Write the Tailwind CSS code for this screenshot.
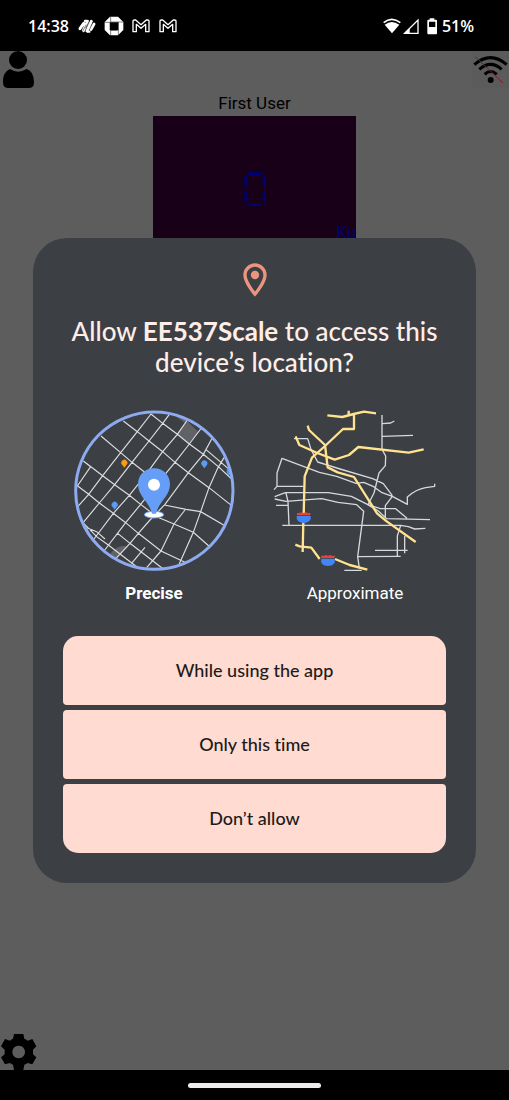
<!DOCTYPE html>
<html lang="en">
<head>
<meta charset="utf-8">
<meta name="viewport" content="width=device-width, initial-scale=1">
<title>Location permission</title>
<script src="https://cdn.jsdelivr.net/npm/@tailwindcss/browser@4"></script>
</head>
<body class="flex min-h-screen flex-col bg-black font-['Roboto',sans-serif]">

<header class="flex h-[51px] items-center justify-between pl-7 pr-[35px] text-white">
  <div class="flex items-center gap-2">
    <time class="font-['Open_Sans',sans-serif] text-[16px] font-semibold leading-6">14:38</time>
    <div class="flex items-center gap-[7px]">
      <svg class="size-5" viewBox="230 47 60 60" fill="none" stroke="#fff" stroke-width="9" stroke-linecap="round" aria-hidden="true">
        <path d="M239 85L250 69M249 91L262 63M260 92L273 63M272 87L281 71"/>
        <path d="M254 62h4M263 94h4" stroke-width="7"/>
        <path d="M246 95L257 74M256 83L267 62M267 88L278 66" stroke="#000" stroke-width="1.5"/>
      </svg>
      <svg class="size-5" viewBox="312 47 60 60" fill="#fff" aria-hidden="true">
        <path fill-rule="evenodd" d="M330 49h24l16 16v24l-16 16h-24l-16-16V65zM330 66v24h25V66z"/>
        <path d="M332 49v16h37M355 65v39M352 90h-20V106M330 90V66H314" fill="none" stroke="#000" stroke-width="1.5"/>
      </svg>
      <svg class="size-5" viewBox="394 47 60 60" fill="none" stroke="#fff" stroke-width="4" stroke-linejoin="round" aria-hidden="true">
        <path id="mail-mark" d="M400 94V62q0-3 4-3h4l16 14 16-14h4q4 0 4 3v32h-10V72l-14 12-14-12v22z"/>
      </svg>
      <svg class="size-5" viewBox="394 47 60 60" fill="none" stroke="#fff" stroke-width="4" stroke-linejoin="round" aria-hidden="true">
        <use href="#mail-mark"/>
      </svg>
    </div>
  </div>
  <div class="flex items-center">
    <svg class="h-[18px] w-[56px]" viewBox="84 50 168 54" fill="none" aria-hidden="true">
      <path d="M89 67Q113 47 139 67" stroke="#fff" stroke-width="5"/>
      <path d="M92 73Q113 57 136 73L114 99z" fill="#fff"/>
      <path d="M152 99L192 59v40z" stroke="#fff" stroke-width="4"/>
      <path d="M150 101L167 83v18z" fill="#fff"/>
      <path fill-rule="evenodd" fill="#fff" d="M227 54h14v4h5q3 0 3 3v38q0 3-3 3h-23q-3 0-3-3V61q0-3 3-3h4zM225 64v16h19V64z"/>
    </svg>
    <span class="ml-1 font-['Open_Sans',sans-serif] text-[16px] font-semibold leading-6">51%</span>
  </div>
</header>

<main class="relative flex grow flex-col bg-[#5d5d5d]">
  <div class="flex items-start justify-between">
    <button type="button" aria-label="User profile" class="h-10 w-[37px]">
      <svg class="h-10 w-[37px]" viewBox="0 153 111 120" aria-hidden="true"><circle cx="54" cy="180" r="27"/><path d="M9 247Q8 216 30 207Q54 223 80 207Q102 214 102 247Q102 264 88 264H23Q9 264 9 247z"/></svg>
    </button>
    <button type="button" aria-label="Connection status" class="h-10 w-[37px]">
      <svg class="h-10 w-[37px]" viewBox="351 153 111 120" fill="none" stroke="#000" stroke-width="9" aria-hidden="true">
        <path d="M351 153h111v110H351z" fill="#5b5b5b" stroke="none"/>
        <path d="M358 194Q407 152 455 194M373 208Q407 178 440 208M389 223Q407 206 425 223"/><circle cx="407" cy="240" r="9" fill="#000" stroke="none"/>
        <path d="M361 170L444 249" stroke="#7a2025" stroke-width="3"/>
      </svg>
    </button>
  </div>
  <h1 class="text-center text-[17px] leading-6 text-black">First User</h1>
  <section aria-label="Weight" class="relative mx-auto mt-px flex h-[146px] w-2/5 items-center justify-center bg-[#190019]">
    <svg role="img" aria-label="0" class="h-9 w-6" viewBox="308 243 72 108" fill="#00006c">
      <path d="M321 246h46l-4 9h-38zM321 348h46l-4-9h-38zM312 255l9 5v27l-9 6zM312 301l9 6v27l-9 6zM376 255l-9 5v27l9 6zM376 301l-9 6v27l9 6z"/>
    </svg>
    <span class="absolute right-0 bottom-[18px] text-[17px] leading-6 text-[#00006c]">Kg</span>
  </section>
  <div class="grow"></div>
  <button type="button" aria-label="Settings" class="h-9 w-[37px]">
    <svg class="h-9 w-[37px]" viewBox="0 42 111 108" aria-hidden="true"><path fill-rule="evenodd" d="M42 42h28l3 14q5 2 10 6l14-5 12 22-10 10v14l10 9-12 21-14-4q-5 3-10 5l-3 16H42l-3-16q-5-2-9-5l-15 4-12-21 11-9V89L3 79l12-22 15 5q4-4 9-6zM55.500 77a19 19 0 1 0 1 0z"/></svg>
  </button>

  <div class="absolute inset-0 flex items-center justify-center px-[33px]">
    <div role="dialog" aria-modal="true" aria-labelledby="dialog-title" class="flex w-full max-w-xl flex-col items-center rounded-[34px] bg-[#3c3f43] px-[30px] pt-[22px] pb-[30px] [font-variant-ligatures:none]">
      <svg class="size-10" viewBox="0 0 24 24" fill="#ec957e" aria-hidden="true"><path fill-rule="evenodd" d="M12 2C8.130 2 5 5.130 5 9c0 5.250 7 13 7 13s7-7.750 7-13c0-3.870-3.130-7-7-7zM7 9c0-2.760 2.240-5 5-5s5 2.240 5 5c0 2.880-2.880 7.190-5 9.880C9.920 16.210 7 11.850 7 9z"/><circle cx="12" cy="9" r="2.500"/></svg>
      <h2 id="dialog-title" class="mt-4 text-center font-['Lato',sans-serif] text-[26px] font-medium leading-[31px] text-[#ffede8]">Allow <b class="font-bold">EE537Scale</b> to access this<br>device’s location?</h2>

      <div role="radiogroup" aria-label="Location accuracy" class="mt-[27px] flex justify-center gap-[31px] text-[17px] leading-6 text-white">
        <label class="relative flex flex-col items-center gap-[6px] font-bold">
          <input type="radio" name="accuracy" value="precise" checked class="absolute inset-0 appearance-none">
          <svg class="size-[170px]" viewBox="-3 0 510 510" fill="none" aria-hidden="true">
            <clipPath id="disc"><circle cx="253" cy="257" r="237"/></clipPath>
            <g clip-path="url(#disc)">
              <path fill="#606265" d="M305 25L345 43L385 80L357 115L322 88L344 53zM120 448Q140 418 175 424L140 460z"/>
              <path stroke="#dcdee0" stroke-width="3.500" d="M160 48L202 80 237 108 278 140 315 172 355 203 417 248 485 302M243 27L278 55 322 88 358 117 400 148 445 185 485 222M93 93L152 143 186 172 250 222M40 168L98 212 134 239 178 271 212 298 260 335 312 357 370 382 420 426M20 241L56 268 88 294 130 325 167 353 205 385 273 438 345 472M36 350L80 395 115 420 150 447 200 485M50 368L80 380 105 402M143 385L180 415 213 440 245 465 280 492M62 185L22 243M40 168L62 185M243 27L202 80 152 143 98 212 56 268 24 304M298 28L278 55 237 108 186 172 134 239 88 294 40 352M352 45L322 88 278 140 228 208 178 271 130 325 72 402M392 72L358 117 315 172 250 250 212 298 167 353 102 438M425 102L400 148 355 203 285 298 240 345 205 385 180 415 138 460M225 427L184 476M273 438L230 488M283 300L348 313 392 320 462 361M345 315L312 357 273 438M462 158L443 190 417 248 392 320 370 382 322 490M400 148L408 134 460 178 485 200"/>
              <ellipse cx="480" cy="199" rx="10" ry="12" fill="#4f99f5"/>
            </g>
            <circle cx="253" cy="257" r="236" stroke="#8eaaf0" stroke-width="9"/>
            <path fill="#fb9a13" d="M163 188l-6-8a9 9 0 1 1 12 0z"/>
            <path fill="#599bf5" d="M403 190l-6-8a9 9 0 1 1 12 0zM134 314l-6-8a9 9 0 1 1 12 0z"/>
            <ellipse cx="252" cy="329" rx="29" ry="10" fill="#fff" stroke="#669df6" stroke-width="3"/>
            <path fill="#669df6" d="M252 190c-29 0-48 21-48 48 0 36 33 51 42 88h12c9-37 42-52 42-88 0-27-19-48-48-48z"/>
            <circle cx="252" cy="239" r="18" fill="#fff"/>
          </svg>
          <span>Precise</span>
        </label>
        <label class="relative flex flex-col items-center gap-[6px]">
          <input type="radio" name="accuracy" value="approximate" class="absolute inset-0 appearance-none">
          <svg class="size-[170px]" viewBox="0 0 510 510" fill="none" stroke-linejoin="round" aria-hidden="true">
            <path stroke="#d5d8dc" stroke-width="4" d="M336 30V133L347 153 346 182 327 204 312 264 295 297M337 56L362 54 373 48M337 94L429 91M72 101H113L123 133 143 171 210 192 308 221 340 236 367 272M12 254L21 244V204L36 160 148 202 200 214 258 235 281 232 311 245 334 262 367 274 412 298V276Q438 253 467 248L494 244V236M367 274L346 302V336M21 244H101M14 275L46 263H175L244 274 292 298 331 311 377 311 411 340M14 282L48 289 155 281 204 292 260 299 281 319 263 455 268 490M18 301H54M48 264L54 290 57 360M37 361H392L415 365 434 372 466 370M292 298L325 318 350 341 480 344M392 361L382 393V457M263 455L392 454M404 392V445M315 436H413M223 496H275"/>
            <path stroke="#ffe38f" stroke-width="7" d="M172 31L217 36 251 27 282 20 318 25M236 17V31M252 27V72H219L165 123 126 158 104 214 101 330M100 350L98 441M113 62L117 75 165 120 173 187 203 202 252 216 321 325 350 349 437 411M77 94L88 120 142 144 194 164 237 150 265 126 416 143 461 133M76 419L89 424 124 428 149 462M195 462L239 480 292 494"/>
            <path fill="#4285f4" d="M80 333H122Q126 351 101 355Q77 351 80 333zM154 461H194Q199 481 174 483Q149 481 154 461z"/>
            <path fill="#ea4335" d="M81 323l6 2 7-3 7 2 7-2 7 3 6-2v8H81zM154 451l6 2 7-3 7 2 7-2 7 3 6-2v8h-40z"/>
          </svg>
          <span>Approximate</span>
        </label>
      </div>

      <div class="mt-[31px] flex w-full flex-col gap-[5px] font-['Lato',sans-serif] text-[18px] font-medium leading-6 text-[#201a18]">
        <button type="button" class="h-[69px] rounded-t-[15px] rounded-b-[4px] bg-[#ffdbd1] pb-[2px]">While using the app</button>
        <button type="button" class="h-[69px] rounded-[4px] bg-[#ffdbd1] pb-[2px]">Only this time</button>
        <button type="button" class="h-[69px] rounded-t-[4px] rounded-b-[15px] bg-[#ffdbd1] pb-[2px]">Don’t allow</button>
      </div>
    </div>
  </div>
</main>

<footer class="flex h-[30px] items-center justify-center">
  <div class="h-[5px] w-[133px] rounded-full bg-[#ececec]"></div>
</footer>
</body>
</html>
